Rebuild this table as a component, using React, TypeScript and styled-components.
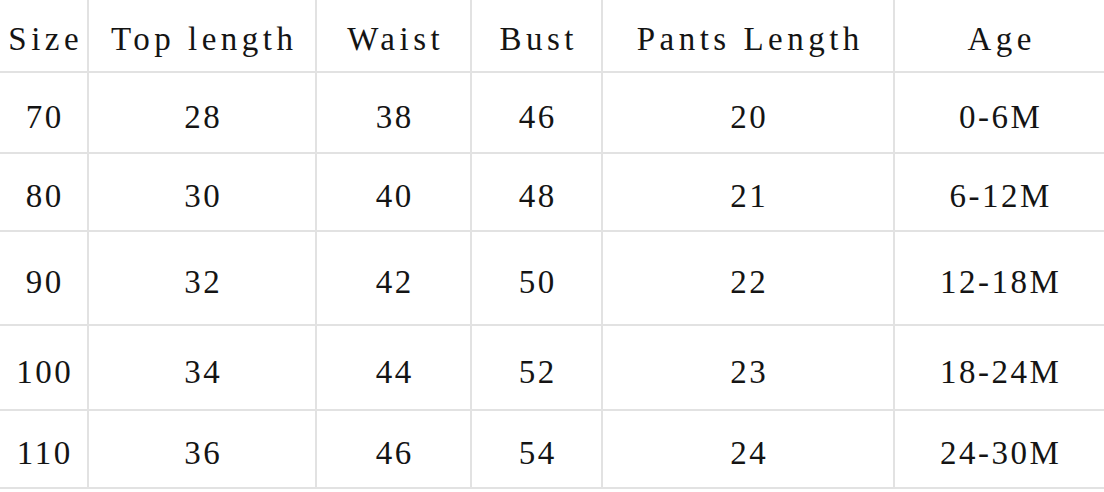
import React from 'react'
import styled, { createGlobalStyle } from 'styled-components'

const GlobalStyle = createGlobalStyle`
  html, body {
    margin: 0;
    padding: 0;
    background: #fff;
  }
`

const Chart = styled.div`
  width: 1104px;
  height: 492px;
  display: grid;
  grid-template-columns: 89px 228px 155px 131px 292px 1fr;
  grid-template-rows: 73px 81px 78px 94px 85px 78px;
  background: #fff;
  font-family: 'Liberation Serif', 'Noto Sans CJK SC', serif;
  font-size: 33px;
  color: #141414;
`

const Cell = styled.div<{ $last?: boolean; $head?: boolean }>`
  display: flex;
  align-items: center;
  justify-content: center;
  padding-top: ${(p) => (p.$head ? '7px' : '9px')};
  box-sizing: border-box;
  border-bottom: 2px solid #e2e2e2;
  border-right: ${(p) => (p.$last ? 'none' : '2px solid #e2e2e2')};
  white-space: nowrap;
  letter-spacing: ${(p) => (p.$head ? '4.5px' : '2.5px')};
  text-indent: ${(p) => (p.$head ? '4.5px' : '2.5px')};
`

const headers = ['Size', 'Top length', 'Waist', 'Bust', 'Pants Length', 'Age']

const rows = [
  ['70', '28', '38', '46', '20', '0-6M'],
  ['80', '30', '40', '48', '21', '6-12M'],
  ['90', '32', '42', '50', '22', '12-18M'],
  ['100', '34', '44', '52', '23', '18-24M'],
  ['110', '36', '46', '54', '24', '24-30M'],
]

export default function App() {
  return (
    <>
      <GlobalStyle />
      <Chart>
        {headers.map((h, i) => (
          <Cell key={h} $head $last={i === headers.length - 1}>
            {h}
          </Cell>
        ))}
        {rows.map((r, ri) =>
          r.map((v, ci) => (
            <Cell key={ri + '-' + ci} $last={ci === r.length - 1}>
              {v}
            </Cell>
          ))
        )}
      </Chart>
    </>
  )
}
